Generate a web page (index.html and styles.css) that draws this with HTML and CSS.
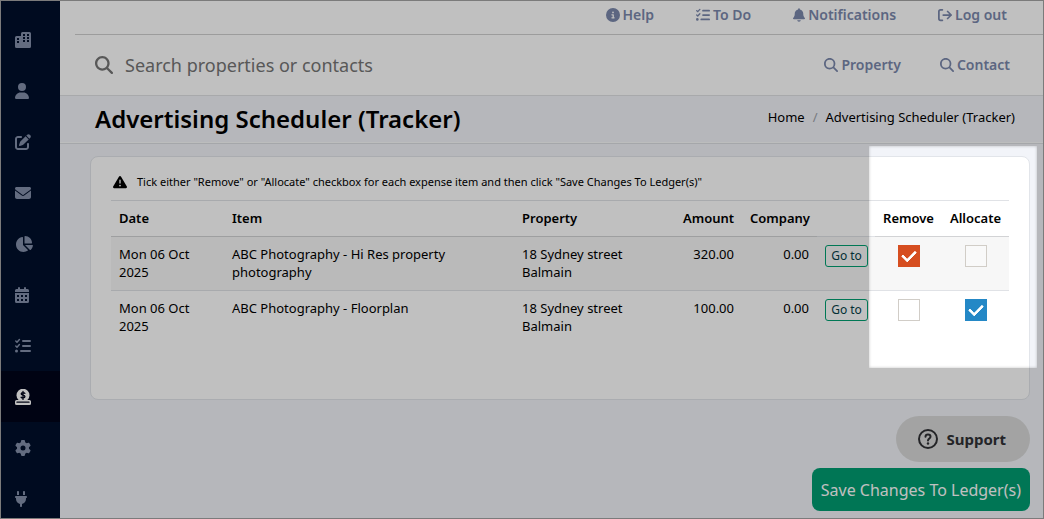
FILE: index.html
```html
<!DOCTYPE html>
<html lang="en">
<head>
<meta charset="utf-8">
<meta name="viewport" content="width=device-width, initial-scale=1">
<title>Advertising Scheduler (Tracker)</title>
<link rel="stylesheet" href="styles.css">
</head>
<body>
<svg class="sprite" aria-hidden="true">
  <symbol id="i-search" viewBox="0 0 512 512"><path d="M416 208c0 45.900-14.900 88.300-40 122.700L502.600 457.400c12.500 12.500 12.500 32.800 0 45.300s-32.800 12.500-45.300 0L330.700 376c-34.400 25.200-76.800 40-122.700 40C93.100 416 0 322.900 0 208S93.100 0 208 0S416 93.100 416 208zM208 352a144 144 0 1 0 0-288 144 144 0 1 0 0 288z"/></symbol>
  <symbol id="i-tasks" viewBox="0 0 16 16"><path fill="none" stroke="currentColor" stroke-width="1.500" stroke-linecap="round" stroke-linejoin="round" d="M.8 3l1.200 1.200L4.400 1.600M.8 8l1.200 1.200L4.400 6.600"/><circle cx="1.500" cy="13" r="1.500"/><path fill="none" stroke="currentColor" stroke-width="2" stroke-linecap="round" d="M8 3h7M8 8h7M6 13h9"/></symbol>
</svg>
<div class="page">
  <nav class="sidebar" aria-label="Main">
    <a href="#" aria-label="Properties"><svg viewBox="0 0 16 16"><path fill-rule="evenodd" d="M7.500 0h7A1.500 1.500 0 0 1 16 1.500v13a1.500 1.500 0 0 1-1.500 1.500h-13A1.500 1.500 0 0 1 0 14.500V5.500A1.500 1.500 0 0 1 1.500 4H6V1.500A1.500 1.500 0 0 1 7.500 0zM8 2v2h2V2zm4 0v2h2V2zM8 5v2h2V5zm4 0v2h2V5zM8 8v2h2V8zm4 0v2h2V8zM2 6v2h2V6zm0 3v2h2V9z"/></svg></a>
    <a href="#" aria-label="Contacts"><svg viewBox="0 0 448 512" class="narrow"><path d="M224 256A128 128 0 1 0 224 0a128 128 0 1 0 0 256zm-45.700 48C79.800 304 0 383.800 0 482.300C0 498.700 13.300 512 29.700 512H418.300c16.400 0 29.700-13.300 29.700-29.700C448 383.800 368.200 304 269.700 304H178.300z"/></svg></a>
    <a href="#" aria-label="Edit"><svg viewBox="0 0 512 512"><path d="M471.600 21.700c-21.900-21.900-57.300-21.900-79.200 0L362.300 51.700l97.900 97.900 30.100-30.100c21.900-21.900 21.900-57.300 0-79.200L471.600 21.700zm-299.200 220c-6.100 6.100-10.800 13.600-13.500 21.900l-29.600 88.800c-2.900 8.600-.6 18.100 5.800 24.600s15.900 8.700 24.600 5.800l88.800-29.600c8.200-2.700 15.700-7.400 21.900-13.500L437.700 172.300 339.700 74.300 172.400 241.700zM96 64C43 64 0 107 0 160V416c0 53 43 96 96 96H352c53 0 96-43 96-96V320c0-17.700-14.300-32-32-32s-32 14.300-32 32v96c0 17.700-14.300 32-32 32H96c-17.700 0-32-14.300-32-32V160c0-17.700 14.300-32 32-32h96c17.700 0 32-14.300 32-32s-14.300-32-32-32H96z"/></svg></a>
    <a href="#" aria-label="Mail"><svg viewBox="0 0 512 512"><path d="M48 64C21.500 64 0 85.500 0 112c0 15.100 7.100 29.300 19.200 38.400L236.800 313.600c11.400 8.500 27 8.500 38.400 0L492.800 150.400c12.100-9.100 19.200-23.300 19.200-38.400c0-26.500-21.500-48-48-48H48zM0 176V384c0 35.300 28.700 64 64 64H448c35.300 0 64-28.700 64-64V176L294.400 339.200c-22.800 17.100-54 17.100-76.800 0L0 176z"/></svg></a>
    <a href="#" aria-label="Reports"><svg viewBox="0 0 576 512" class="wide"><path d="M304 240V16.600c0-9 7-16.600 16-16.600C443.700 0 544 100.300 544 224c0 9-7.600 16-16.600 16H304zM32 272C32 150.700 122.100 50.300 239 34.300c9.200-1.300 17 6.100 17 15.400V288L412.500 444.500c6.700 6.700 6.200 17.700-1.500 23.100C371.800 495.600 323.800 512 272 512C139.500 512 32 404.600 32 272zm526.400 16c9.300 0 16.600 7.800 15.400 17c-7.700 55.900-34.600 105.600-73.900 142.300c-6 5.600-15.400 5.200-21.200-.7L320 288H558.400z"/></svg></a>
    <a href="#" aria-label="Calendar"><svg viewBox="0 0 14 16" class="narrow"><path fill-rule="evenodd" d="M3 1a1 1 0 0 1 2 0v1h4V1a1 1 0 0 1 2 0v1h1.500A1.500 1.500 0 0 1 14 3.500V5H0V3.500A1.500 1.500 0 0 1 1.500 2H3zM0 6h14v8.500a1.500 1.500 0 0 1-1.500 1.500h-11A1.500 1.500 0 0 1 0 14.500zm2 2v2h2V8zm4 0v2h2V8zm4 0v2h2V8zM2 12v2h2v-2zm4 0v2h2v-2zm4 0v2h2v-2z"/></svg></a>
    <a href="#" aria-label="Tasks"><svg><use href="#i-tasks"/></svg></a>
    <a href="#" aria-label="Accounts" class="active" aria-current="page"><svg viewBox="0 0 16 16"><path d="M3.600 11A6.500 6.500 0 1 1 12.400 11z"/><path fill="none" stroke="#00041a" stroke-width="1.300" stroke-linecap="round" d="M9.900 4.300C9.300 3.600 6.300 3.300 6.200 4.900c0 1.500 3.700 1 3.700 2.700C9.800 9.300 6.800 9 6.100 8.200M8 2.500v8"/><path fill-rule="evenodd" d="M1.500 11h13a1.500 1.500 0 0 1 1.500 1.500v2a1.500 1.500 0 0 1-1.500 1.500h-13A1.500 1.500 0 0 1 0 14.500v-2A1.500 1.500 0 0 1 1.500 11zM2 12.500a.6.6 0 0 0 0 1.300h12a.6.6 0 0 0 0-1.300z"/></svg></a>
    <a href="#" aria-label="Settings"><svg viewBox="0 0 512 512"><path d="M495.900 166.600c3.200 8.700 .5 18.400-6.400 24.600l-43.300 39.400c1.100 8.300 1.700 16.800 1.700 25.400s-.6 17.100-1.700 25.400l43.300 39.400c6.900 6.200 9.600 15.900 6.400 24.600c-4.400 11.900-9.700 23.300-15.800 34.300l-4.700 8.100c-6.600 11-14 21.400-22.100 31.200c-5.900 7.200-15.700 9.600-24.500 6.800l-55.700-17.700c-13.400 10.300-28.200 18.900-44 25.400l-12.500 57.100c-2 9.100-9 16.300-18.200 17.800c-13.800 2.300-28 3.500-42.500 3.500s-28.700-1.200-42.500-3.500c-9.200-1.500-16.200-8.700-18.200-17.800l-12.500-57.100c-15.800-6.500-30.600-15.100-44-25.400L83.100 425.900c-8.800 2.800-18.600 .3-24.500-6.800c-8.100-9.800-15.500-20.200-22.100-31.200l-4.700-8.100c-6.100-11-11.400-22.400-15.800-34.300c-3.200-8.700-.5-18.400 6.400-24.600l43.300-39.400C64.600 273.100 64 264.600 64 256s.6-17.100 1.700-25.400L22.400 191.200c-6.900-6.200-9.600-15.900-6.400-24.600c4.400-11.900 9.700-23.300 15.800-34.300l4.700-8.100c6.600-11 14-21.400 22.100-31.200c5.900-7.200 15.700-9.600 24.500-6.800l55.700 17.700c13.400-10.300 28.200-18.900 44-25.400l12.500-57.100c2-9.100 9-16.300 18.200-17.800C227.300 1.200 241.500 0 256 0s28.700 1.200 42.500 3.500c9.200 1.500 16.200 8.700 18.200 17.800l12.500 57.100c15.800 6.500 30.600 15.100 44 25.400l55.700-17.700c8.800-2.800 18.600-.3 24.500 6.800c8.100 9.800 15.500 20.200 22.100 31.200l4.700 8.100c6.100 11 11.400 22.400 15.800 34.300zM256 336a80 80 0 1 0 0-160 80 80 0 1 0 0 160z"/></svg></a>
    <a href="#" aria-label="Integrations"><svg viewBox="0 0 384 512" class="slim"><path d="M96 0C78.300 0 64 14.300 64 32v96h64V32c0-17.700-14.300-32-32-32zM288 0c-17.700 0-32 14.300-32 32v96h64V32c0-17.700-14.300-32-32-32zM32 160c-17.700 0-32 14.300-32 32s14.300 32 32 32v32c0 77.400 55 142 128 156.800V480c0 17.700 14.300 32 32 32s32-14.300 32-32V412.800C297 398 352 333.400 352 256V224c17.700 0 32-14.300 32-32s-14.300-32-32-32H32z"/></svg></a>
  </nav>

  <div class="main">
    <header class="header">
      <nav class="topnav" aria-label="Account">
        <a href="#"><svg viewBox="0 0 512 512"><path d="M256 512A256 256 0 1 0 256 0a256 256 0 1 0 0 512zM216 336h24V272H216c-13.300 0-24-10.700-24-24s10.700-24 24-24h48c13.300 0 24 10.700 24 24v88h8c13.300 0 24 10.700 24 24s-10.700 24-24 24H216c-13.300 0-24-10.700-24-24s10.700-24 24-24zm40-208a32 32 0 1 1 0 64 32 32 0 1 1 0-64z"/></svg>Help</a>
        <a href="#"><svg><use href="#i-tasks"/></svg>To Do</a>
        <a href="#"><svg viewBox="0 0 448 512" class="bell"><path d="M224 0c-17.700 0-32 14.300-32 32V51.200C119 66 64 130.600 64 208v18.800c0 47-17.300 92.400-48.500 127.600l-7.400 8.300c-8.400 9.400-10.400 22.900-5.300 34.400S19.400 416 32 416H416c12.600 0 24-7.400 29.200-18.900s3.100-25-5.300-34.400l-7.400-8.300C401.300 319.200 384 273.900 384 226.800V208c0-77.400-55-142-128-156.800V32c0-17.700-14.300-32-32-32zm45.300 493.300c12-12 18.700-28.300 18.700-45.300H224 160c0 17 6.700 33.300 18.700 45.300s28.300 18.700 45.300 18.700s33.300-6.700 45.300-18.700z"/></svg>Notifications</a>
        <a href="#"><svg viewBox="0 0 16 16"><path fill="none" stroke="currentColor" stroke-width="2" stroke-linecap="round" stroke-linejoin="round" d="M5 2H3a2 2 0 0 0-2 2v8a2 2 0 0 0 2 2h2M6 8h9M11 4l4 4-4 4"/></svg>Log out</a>
      </nav>
      <div class="searchbar">
        <label class="search"><svg><use href="#i-search"/></svg><input type="text" aria-label="Search properties or contacts" placeholder="Search properties or contacts"></label>
        <a href="#"><svg><use href="#i-search"/></svg>Property</a>
        <a href="#"><svg><use href="#i-search"/></svg>Contact</a>
      </div>
    </header>

    <div class="titlebar">
      <h1>Advertising Scheduler (Tracker)</h1>
      <nav class="crumbs" aria-label="Breadcrumb"><a href="#">Home</a><span class="sep">/</span><span>Advertising Scheduler (Tracker)</span></nav>
    </div>

    <main class="content">
      <section class="card">
        <p class="notice"><svg viewBox="0 0 512 512"><path d="M256 32c14.200 0 27.300 7.500 34.500 19.800l216 368c7.300 12.400 7.300 27.700 .2 40.100S486.300 480 472 480H40c-14.300 0-27.600-7.700-34.700-20.100s-7-27.800 .2-40.100l216-368C228.700 39.500 241.800 32 256 32zm0 128c-13.300 0-24 10.700-24 24V296c0 13.300 10.700 24 24 24s24-10.700 24-24V184c0-13.300-10.700-24-24-24zm32 224a32 32 0 1 0 -64 0 32 32 0 1 0 64 0z"/></svg>Tick either "Remove" or "Allocate" checkbox for each expense item and then click "Save Changes To Ledger(s)"</p>
        <table class="ledger">
          <colgroup><col class="c-date"><col class="c-item"><col><col class="c-amount"><col class="c-company"><col class="c-goto"><col class="c-tick"><col class="c-tick"></colgroup>
          <thead>
            <tr><th>Date</th><th>Item</th><th>Property</th><th class="num">Amount</th><th class="num">Company</th><td class="blank"></td><th class="tick">Remove</th><th class="tick">Allocate</th></tr>
          </thead>
          <tbody>
            <tr><td>Mon 06 Oct 2025</td><td>ABC Photography - Hi Res property photography</td><td>18 Sydney street<br>Balmain</td><td class="num">320.00</td><td class="num">0.00</td><td><button type="button" class="goto">Go to</button></td><td class="tick"><input type="checkbox" class="remove" aria-label="Remove Hi Res property photography" checked></td><td class="tick"><input type="checkbox" aria-label="Allocate Hi Res property photography"></td></tr>
            <tr><td>Mon 06 Oct 2025</td><td>ABC Photography - Floorplan</td><td>18 Sydney street<br>Balmain</td><td class="num">100.00</td><td class="num">0.00</td><td><button type="button" class="goto">Go to</button></td><td class="tick"><input type="checkbox" class="remove" aria-label="Remove Floorplan"></td><td class="tick"><input type="checkbox" aria-label="Allocate Floorplan" checked></td></tr>
          </tbody>
        </table>
      </section>
      <div class="actions">
        <button type="button" class="support"><svg viewBox="0 0 20 20"><g fill="none" stroke="currentColor" stroke-width="2" stroke-linecap="round"><circle cx="10" cy="10" r="9"/><path d="M7.500 7.700C7.600 4.700 12.500 4.800 12.500 7.700c0 1.700-2.400 1.900-2.500 3.800"/></g><circle cx="10" cy="14.500" r="1.200"/></svg>Support</button>
        <button type="button" class="save">Save Changes To Ledger(s)</button>
      </div>
    </main>
  </div>
  <div class="spotlight"></div>
</div>
</body>
</html>
```

FILE: styles.css
```css
* { box-sizing: border-box; }

body {
  margin: 0;
  font: 13px/18px "Noto Sans", "Open Sans", sans-serif;
  color: #000;
}

a { color: inherit; text-decoration: none; }
button, input { font: inherit; margin: 0; }
svg { fill: currentColor; flex: none; }
.sprite { position: absolute; width: 0; height: 0; }

.page {
  position: relative;
  display: flex;
  height: 100vh;
  overflow: hidden;
  border: 1px solid #7b7b7b;
  background: #f2f4f9;
}

/* Dims everything except the highlighted area */
.spotlight {
  position: absolute;
  top: 145px;
  right: 6px;
  width: 168px;
  height: 222px;
  box-shadow: 0 0 4px 2000px rgba(0, 0, 0, .247), inset 0 0 3px rgba(0, 0, 0, .25);
  pointer-events: none;
}

.sidebar {
  flex: none;
  width: 59px;
  padding-top: 13px;
  overflow: hidden;
  background: #000f2b;
  color: #8490aa;
}
.sidebar a {
  display: flex;
  align-items: center;
  height: 51px;
  padding-left: 14px;
}
.sidebar svg { width: 16px; height: 16px; }
.sidebar svg.narrow { width: 14px; }
.sidebar svg.wide { width: 18px; }
.sidebar svg.slim { width: 12px; }
.sidebar .active { background: #00041a; color: #fff; }

.main { flex: 1; min-width: 0; }

.header {
  background: #fff;
  border-bottom: 1px solid #dfe1e4;
  font-size: 14px;
  line-height: 20px;
  font-weight: 600;
  color: #7b88ac;
}
.header a { display: flex; align-items: center; gap: 3px; }
.header a svg { width: 14px; height: 14px; }
.header a svg.bell { width: 12px; }

.topnav {
  display: flex;
  justify-content: flex-end;
  gap: 42px;
  margin-left: 15px;
  padding: 4px 36px 9px 0;
  border-bottom: 1px solid #cfcfcf;
}
.searchbar {
  display: flex;
  align-items: center;
  gap: 39px;
  height: 60px;
  padding: 0 33px 0 35px;
}
.search { flex: 1; display: flex; align-items: center; gap: 12px; color: #757575; }
.search svg { width: 18px; height: 18px; }
.search input {
  flex: 1;
  min-width: 0;
  padding: 0;
  border: 0;
  outline: 0;
  background: none;
  font-size: 18px;
  line-height: 26px;
  font-weight: 400;
}
.search input::placeholder { color: #757575; opacity: 1; }

.titlebar {
  display: flex;
  align-items: flex-start;
  justify-content: space-between;
  height: 48px;
  padding: 7px 28px 0 35px;
  border-bottom: 1px solid #dcdee2;
  box-shadow: inset 0 -1px #fafbfc;
}
h1 { margin: 0; font-size: 24px; line-height: 32px; font-weight: 600; }
.crumbs { display: flex; gap: 8px; padding-top: 5px; }
.crumbs .sep { color: #a0a3aa; }

.content { padding: 12px 13px 7px 30px; }

.card {
  padding: 16px 20px 55px;
  background: #fff;
  border: 1px solid #e2e5ea;
  border-radius: 8px;
}
.notice {
  display: flex;
  align-items: center;
  gap: 10px;
  margin: 0 0 9px;
  padding-left: 2px;
  font-size: 11px;
}
.notice svg { width: 14px; height: 14px; }

.ledger {
  width: 100%;
  table-layout: fixed;
  border-collapse: separate;
  border-spacing: 0;
}
.c-date { width: 113px; }
.c-item { width: 290px; }
.c-amount { width: 67px; }
.c-company { width: 75px; }
.c-goto { width: 58px; }
.c-tick { width: 67px; }

.ledger th, .ledger td {
  padding: 8px;
  text-align: left;
  vertical-align: top;
  border-top: 1px solid #e0e2e6;
}
.ledger th { padding-bottom: 9px; font-weight: 600; border-bottom: 1px solid #d2d3d5; }
.ledger .blank { border-bottom: 1px solid #e0e2e6; }
.ledger tbody td { padding-bottom: 9px; }
.ledger tbody tr:first-child td { border-top-width: 0; padding-top: 8px; }
.ledger tbody tr:first-child { background: #f7f7f7; }
.ledger .num { text-align: right; }
.ledger .tick { text-align: center; padding-left: 0; padding-right: 0; }

.goto {
  display: block;
  width: 43px;
  height: 22px;
  padding: 0;
  border: 1px solid #00a072;
  border-radius: 3px;
  background: none;
  font-size: 12px;
  line-height: 18px;
  color: #053f49;
}

input[type="checkbox"] {
  appearance: none;
  display: block;
  width: 22px;
  height: 22px;
  margin: 0 auto;
  border: 1px solid #d1cdc7;
  background: #fff;
}
.ledger tr:first-child input { background: #f9f9f9; }
.ledger tr input:checked {
  display: grid;
  place-content: center;
  background: #2488c6;
  border-color: #2488c6;
}
.ledger tr input.remove:checked { background: #d64e20; border-color: #d64e20; }
input:checked::before {
  content: "";
  width: 11px;
  height: 6px;
  margin-bottom: 4px;
  border: solid #fff;
  border-width: 0 0 3px 3px;
  border-radius: 1px;
  transform: rotate(-45deg);
}

.actions {
  display: flex;
  flex-direction: column;
  align-items: flex-end;
  gap: 6px;
  margin-top: 16px;
}
.actions button { border: 0; }
.support {
  display: flex;
  align-items: center;
  gap: 8px;
  height: 46px;
  padding: 0 24px 0 22px;
  border-radius: 23px;
  background: #d9d9d9;
  color: #303135;
  font-size: 15px;
  font-weight: 700;
}
.support svg { width: 20px; height: 20px; }
.save {
  height: 43px;
  padding: 0 9px;
  border-radius: 8px;
  background: #009d72;
  color: #fff;
  font-size: 16px;
}
```
